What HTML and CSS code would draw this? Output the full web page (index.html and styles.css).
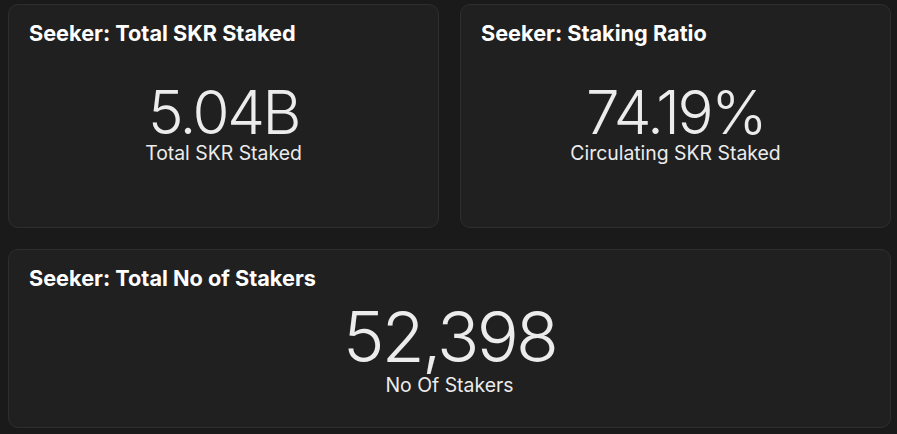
FILE: index.html
```html
<!DOCTYPE html>
<html lang="en">
<head>
    <meta charset="UTF-8">
    <meta name="viewport" content="width=device-width, initial-scale=1.0">
    <title>Seeker Staking</title>
    <link rel="stylesheet" href="styles.css">
</head>
<body>
    <div class="dashboard">
        <div class="card card-top">
            <h2 class="card-title">Seeker: Total SKR Staked</h2>
            <div class="counter">
                <div class="counter-value">5.04B</div>
                <div class="counter-label">Total SKR Staked</div>
            </div>
        </div>

        <div class="card card-top">
            <h2 class="card-title">Seeker: Staking Ratio</h2>
            <div class="counter">
                <div class="counter-value">74.19%</div>
                <div class="counter-label">Circulating SKR Staked</div>
            </div>
        </div>

        <div class="card card-wide">
            <h2 class="card-title">Seeker: Total No of Stakers</h2>
            <div class="counter">
                <div class="counter-value">52,398</div>
                <div class="counter-label">No Of Stakers</div>
            </div>
        </div>
    </div>
</body>
</html>
```

FILE: styles.css
```css
body {
    margin: 0;
    padding: 4px 6px 6px 8px;
    background: #1a1a1a;
    font-family: 'Inter', 'Liberation Sans', sans-serif;
    color: #fff;
}

.dashboard {
    display: grid;
    grid-template-columns: 431px 431px;
    grid-template-rows: 224px 179px;
    gap: 21px;
}

.card {
    background: #202020;
    border: 1px solid #2e2e2e;
    border-radius: 10px;
    padding: 15px 20px;
    display: flex;
    flex-direction: column;
}

.card-wide {
    grid-column: 1 / 3;
}

.card-title {
    margin: 0;
    font-size: 21.7px;
    line-height: 26px;
    font-weight: 700;
    color: #fff;
}

.counter {
    text-align: center;
    color: #ececec;
}

.counter-value {
    font-weight: 300;
    letter-spacing: -0.04em;
}

.counter-label {
    font-size: 19.4px;
    line-height: 22px;
}

/* top row: smaller numbers with more room above */
.card-top .counter {
    margin-top: 36px;
}

.card-top .counter-value {
    font-size: 60px;
    line-height: 60px;
}

.card-wide .counter {
    margin-top: 11px;
}

.card-wide .counter-value {
    font-size: 70px;
    line-height: 70px;
}

.card-wide .counter-label {
    margin-top: 2px;
}
```
